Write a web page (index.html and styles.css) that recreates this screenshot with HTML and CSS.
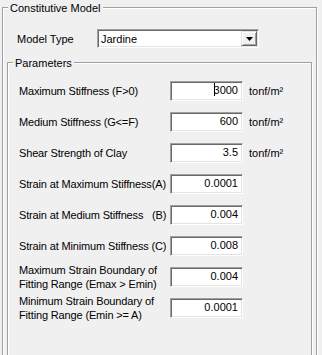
FILE: index.html
```html
<!DOCTYPE html>
<html lang="en">
<head>
  <meta charset="UTF-8" />
  <meta name="viewport" content="width=device-width, initial-scale=1.0" />
  <title>Constitutive Model</title>
  <link rel="stylesheet" href="styles.css">
</head>
<body>
  <fieldset class="group outer">
    <legend>Constitutive Model</legend>

    <div class="model-row">
      <span class="model-label">Model Type</span>
      <div class="combo">
        <span class="combo-text">Jardine</span>
        <span class="drop">
          <svg width="7" height="4" viewBox="0 0 7 4"><path d="M0 0H7L3.5 4Z" fill="#000"/></svg>
        </span>
      </div>
    </div>

    <fieldset class="group params">
      <legend>Parameters</legend>
      <div class="param-grid">
        <span class="lbl">Maximum Stiffness (F&gt;0)</span>
        <div class="field"><span class="caret"></span>3000</div>
        <span class="unit">tonf/m²</span>

        <span class="lbl">Medium Stiffness (G&lt;=F)</span>
        <div class="field">600</div>
        <span class="unit">tonf/m²</span>

        <span class="lbl">Shear Strength of Clay</span>
        <div class="field">3.5</div>
        <span class="unit">tonf/m²</span>

        <span class="lbl">Strain at Maximum Stiffness(A)</span>
        <div class="field">0.0001</div>
        <span class="unit"></span>

        <span class="lbl">Strain at Medium Stiffness &nbsp;&nbsp;(B)</span>
        <div class="field">0.004</div>
        <span class="unit"></span>

        <span class="lbl">Strain at Minimum Stiffness (C)</span>
        <div class="field">0.008</div>
        <span class="unit"></span>

        <span class="lbl">Maximum Strain Boundary of<br>Fitting Range (Emax &gt; Emin)</span>
        <div class="field">0.004</div>
        <span class="unit"></span>

        <span class="lbl">Minimum Strain Boundary of<br>Fitting Range (Emin &gt;= A)</span>
        <div class="field">0.0001</div>
        <span class="unit"></span>
      </div>
    </fieldset>
  </fieldset>
</body>
</html>
```

FILE: styles.css
```css
html { overflow: hidden; }
body { margin: 0; background: #f0f0f0; font-family: "Liberation Sans", Arial, sans-serif; font-size: 11px; color: #000; }

.group {
  box-sizing: border-box;
  margin: 0;
  padding: 0;
  min-width: 0;
  border: 1px solid #a0a0a0;
  box-shadow: inset 1px 1px #fff, 1px 1px #fff;
}
.group legend {
  margin-left: 5px;
  padding: 2px 2px 0;
  line-height: 13px;
  background: #f0f0f0;
}

.outer { margin-left: 2px; width: 315px; height: 420px; }
.params { margin: 7px 0 0 4px; width: 305px; height: 380px; }

.model-row { display: flex; align-items: center; margin-top: 14px; padding-left: 14px; }
.model-label { width: 80px; }
.combo {
  box-sizing: border-box;
  display: flex;
  align-items: center;
  width: 162px;
  height: 19px;
  background: #fff;
  border: 1px solid;
  border-color: #a0a0a0 #fff #fff #a0a0a0;
  box-shadow: inset 1px 1px #696969, inset -1px -1px #e3e3e3;
  padding: 1px 1px 1px 3px;
}
.combo-text { flex: 1; }
.drop {
  box-sizing: border-box;
  display: flex;
  align-items: center;
  justify-content: center;
  width: 16px;
  height: 15px;
  background: #f0f0f0;
  border: 1px solid;
  border-color: #e3e3e3 #696969 #696969 #e3e3e3;
  box-shadow: inset 1px 1px #fff, inset -1px -1px #a0a0a0;
}

.param-grid {
  display: grid;
  grid-template-columns: 151px 73px auto;
  grid-auto-rows: 20px;
  row-gap: 11px;
  align-items: center;
  padding: 11px 0 0 11px;
  line-height: 14px;
}
.lbl { white-space: nowrap; letter-spacing: -0.15px; }
.unit { margin-left: 6px; }
.field {
  box-sizing: border-box;
  height: 20px;
  line-height: 17px;
  background: #fff;
  text-align: right;
  padding-right: 4px;
  border: 1px solid;
  border-color: #a0a0a0 #fff #fff #a0a0a0;
  box-shadow: inset 1px 1px #696969, inset -1px -1px #e3e3e3;
}
.caret {
  display: inline-block;
  width: 1px;
  height: 13px;
  margin-right: -1px;
  vertical-align: -2px;
  background: #000;
}
```
